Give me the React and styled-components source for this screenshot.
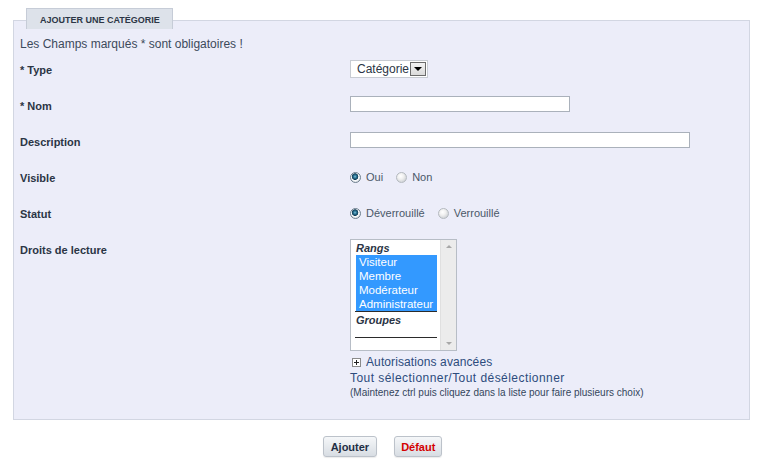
import React from 'react';
import styled, { createGlobalStyle } from 'styled-components';

const GlobalStyle = createGlobalStyle`
  body {
    margin: 0;
    background: #ffffff;
    font-family: "Liberation Sans", Arial, sans-serif;
  }
`;

const Page = styled.div`
  width: 762px;
  height: 463px;
  padding: 8px 13px 0 13px;
  box-sizing: border-box;
`;

const Tab = styled.div`
  position: relative;
  z-index: 1;
  display: flex;
  align-items: center;
  width: fit-content;
  height: 21px;
  box-sizing: border-box;
  margin-left: 13px;
  margin-bottom: -9px;
  padding: 1px 12px 0 13px;
  background: #dde2ea;
  border: 1px solid #c6ccd7;
  border-bottom: none;
  color: #2c3646;
  font-size: 9px;
  font-weight: bold;
  text-transform: uppercase;
`;

const Panel = styled.div`
  width: 737px;
  height: 400px;
  box-sizing: border-box;
  padding: 15px 6px 0 6px;
  background: #ecedf9;
  border: 1px solid #d2d6e2;
`;

const Intro = styled.div`
  height: 16px;
  line-height: 16px;
  margin-bottom: 8px;
  font-size: 12px;
  color: #3c4a5b;
`;

const Row = styled.div`
  display: grid;
  grid-template-columns: 330px 1fr;
  height: ${p => p.$h || 36}px;
`;

const Label = styled.div`
  padding-top: 2px;
  line-height: 16px;
  font-size: 11px;
  font-weight: bold;
  color: #2b3545;
`;

const Select = styled.div`
  display: flex;
  align-items: center;
  justify-content: space-between;
  width: 78px;
  height: 18px;
  box-sizing: border-box;
  padding: 0 1px 0 6px;
  background: #fff;
  border: 1px solid #c8ccd3;
  font-size: 12px;
  color: #2b3545;
`;

const DropButton = styled.span`
  display: flex;
  align-items: center;
  justify-content: center;
  width: 16px;
  height: 14px;
  box-sizing: border-box;
  background: linear-gradient(#f3f3f3, #dadada);
  border: 1px solid #6b6b6b;
  &::after {
    content: '';
    border-left: 4px solid transparent;
    border-right: 4px solid transparent;
    border-top: 4px solid #000;
  }
`;

const TextInput = styled.input`
  display: block;
  width: ${p => p.$w}px;
  height: 16px;
  box-sizing: border-box;
  margin: 0;
  padding: 0 2px;
  background: #fff;
  border: 1px solid #aab1bb;
  outline: none;
`;

const Radios = styled.div`
  display: flex;
  align-items: center;
  height: 16px;
  margin-top: 1px;
`;

const RadioItem = styled.label`
  display: flex;
  align-items: center;
  margin-right: 13px;
  font-size: 11px;
  color: #4a5868;
`;

const RadioDot = styled.span`
  width: 11px;
  height: 11px;
  box-sizing: border-box;
  margin-right: 5px;
  border-radius: 50%;
  border: 1px solid ${p => (p.$on ? '#6d7f8e' : '#b4b9bf')};
  background: ${p =>
    p.$on
      ? 'radial-gradient(circle at 45% 40%, #7fc3dc 0, #2a7494 1.5px, #123e58 3px, #ffffff 3.6px, #e4e8ec 5px)'
      : 'radial-gradient(circle at 40% 35%, #ffffff 0, #f0f0f0 3px, #d2d5d8 6px)'};
`;

const ListBox = styled.div`
  display: flex;
  width: 107px;
  height: 112px;
  box-sizing: border-box;
  margin-top: -1px;
  background: #fff;
  border: 1px solid #b7bdc6;
`;

const ListItems = styled.div`
  flex: 1;
  padding: 1px 3px 0 4px;
  font-size: 11.5px;
  line-height: 14px;
  color: #2b3545;
`;

const Group = styled.div`
  font-style: italic;
  font-weight: bold;
  padding-left: 1px;
  font-size: 11px;
  ${p => p.$line && 'border-top: 1px solid #2b2b2b; margin-top: 0; padding-top: 1px;'}
`;

const Option = styled.div`
  background: #3399ff;
  color: #ffffff;
  padding-left: 3px;
  margin-left: 1px;
`;

const Rule = styled.div`
  margin-top: 10px;
  border-top: 1px solid #2b2b2b;
`;

const ScrollBar = styled.div`
  display: flex;
  flex-direction: column;
  justify-content: space-between;
  align-items: center;
  width: 16px;
  padding: 5px 0 5px 0;
  box-sizing: border-box;
  background: #ececec;
  border-left: 1px solid #e0e0e0;
`;

const Arrow = styled.span`
  border-left: 3px solid transparent;
  border-right: 3px solid transparent;
  ${p => (p.$up ? 'border-bottom: 3px solid #a8a8a8;' : 'border-top: 3px solid #a8a8a8;')}
`;

const Extra = styled.div`
  display: flex;
  flex-direction: column;
  margin-top: 3px;
`;

const Advanced = styled.div`
  display: flex;
  align-items: center;
  height: 16px;
  padding-left: 2px;
  font-size: 12px;
  letter-spacing: 0.1px;
  color: #2d4c7d;
`;

const PlusBox = styled.span`
  position: relative;
  width: 9px;
  height: 9px;
  box-sizing: border-box;
  margin-right: 5px;
  border: 1px solid #8a8a8a;
  background: #fff;
  &::before, &::after {
    content: '';
    position: absolute;
    background: #222;
  }
  &::before { left: 1px; top: 3px; width: 5px; height: 1px; }
  &::after { left: 3px; top: 1px; width: 1px; height: 5px; }
`;

const SelectAll = styled.div`
  height: 16px;
  line-height: 16px;
  font-size: 12px;
  letter-spacing: 0.45px;
  color: #2d4c7d;
`;

const Hint = styled.div`
  line-height: 14px;
  font-size: 10px;
  color: #34465c;
`;

const Buttons = styled.div`
  display: flex;
  justify-content: center;
  gap: 17px;
  margin-top: 16px;
  padding-left: 3px;
`;

const Button = styled.button`
  height: 21px;
  padding: 0 ${p => p.$pad}px;
  border: 1px solid #bcc2ca;
  border-radius: 3px;
  background: linear-gradient(#f5f7f9, #d8dde3);
  box-shadow: 0 1px 1px rgba(0, 0, 0, 0.08);
  font-family: "Liberation Sans", Arial, sans-serif;
  font-size: 11px;
  font-weight: bold;
  color: ${p => p.$color};
`;

function Radio({ on, children }) {
  return (
    <RadioItem>
      <RadioDot $on={on} />
      {children}
    </RadioItem>
  );
}

export default function App() {
  return (
    <Page>
      <GlobalStyle />
      <Tab>Ajouter une catégorie</Tab>
      <Panel>
        <Intro>Les Champs marqués * sont obligatoires !</Intro>
        <Row>
          <Label>* Type</Label>
          <div>
            <Select>
              Catégorie
              <DropButton />
            </Select>
          </div>
        </Row>
        <Row>
          <Label>* Nom</Label>
          <div><TextInput $w={220} /></div>
        </Row>
        <Row>
          <Label>Description</Label>
          <div><TextInput $w={340} /></div>
        </Row>
        <Row>
          <Label>Visible</Label>
          <Radios>
            <Radio on>Oui</Radio>
            <Radio>Non</Radio>
          </Radios>
        </Row>
        <Row>
          <Label>Statut</Label>
          <Radios>
            <Radio on>Déverrouillé</Radio>
            <Radio>Verrouillé</Radio>
          </Radios>
        </Row>
        <Row $h={160}>
          <Label>Droits de lecture</Label>
          <div>
            <ListBox>
              <ListItems>
                <Group>Rangs</Group>
                <Option>Visiteur</Option>
                <Option>Membre</Option>
                <Option>Modérateur</Option>
                <Option>Administrateur</Option>
                <Group $line>Groupes</Group>
                <Rule />
              </ListItems>
              <ScrollBar>
                <Arrow $up />
                <Arrow />
              </ScrollBar>
            </ListBox>
            <Extra>
              <Advanced><PlusBox />Autorisations avancées</Advanced>
              <SelectAll>Tout sélectionner/Tout désélectionner</SelectAll>
              <Hint>(Maintenez ctrl puis cliquez dans la liste pour faire plusieurs choix)</Hint>
            </Extra>
          </div>
        </Row>
      </Panel>
      <Buttons>
        <Button $pad={7} $color="#1f2e44">Ajouter</Button>
        <Button $pad={6} $color="#d40000">Défaut</Button>
      </Buttons>
    </Page>
  );
}
